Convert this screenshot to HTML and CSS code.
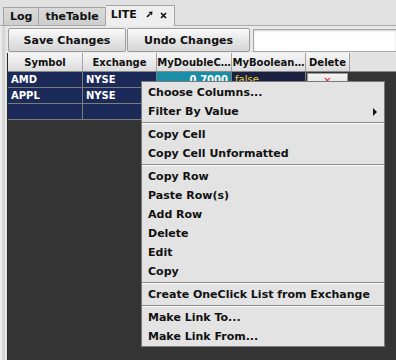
FILE: index.html
```html
<!DOCTYPE html>
<html>
<head>
    <title>LITE</title>
    <link rel="stylesheet" href="styles.css">
</head>
<body>
    <div class="tabs">
        <div class="tab">Log</div>
        <div class="tab">theTable</div>
        <div class="tab active">
            <span>LITE</span>
            <svg class="undock" width="7" height="7" viewBox="0 0 7 7">
                <path d="M1 6 L4 3" stroke="#111" stroke-width="1.6"/>
                <path d="M2.5 1 L6.5 0.5 L6 4.5 Z" fill="#111"/>
            </svg>
            <svg class="close" width="7" height="7" viewBox="0 0 7 7">
                <path d="M1 1 L6 6 M6 1 L1 6" stroke="#111" stroke-width="1.7"/>
            </svg>
        </div>
    </div>

    <div class="content">
        <div class="toolbar">
            <button class="btn save">Save Changes</button>
            <button class="btn undo">Undo Changes</button>
            <input class="field" type="text">
        </div>

        <div class="table">
            <div class="row head">
                <div class="hcell">Symbol</div>
                <div class="hcell">Exchange</div>
                <div class="hcell">MyDoubleC…</div>
                <div class="hcell">MyBoolean…</div>
                <div class="hcell">Delete</div>
            </div>
            <div class="row data">
                <div class="cell">AMD</div>
                <div class="cell">NYSE</div>
                <div class="cell num">0.7000</div>
                <div class="cell bool">false</div>
                <div class="cell del"><span class="x">&#x2715;</span></div>
            </div>
            <div class="row data">
                <div class="cell">APPL</div>
                <div class="cell">NYSE</div>
                <div class="cell"></div>
                <div class="cell"></div>
                <div class="cell"></div>
            </div>
            <div class="row data">
                <div class="cell"></div>
                <div class="cell"></div>
                <div class="cell"></div>
                <div class="cell"></div>
                <div class="cell"></div>
            </div>
        </div>

        <!-- right-click menu over the table -->
        <div class="menu">
            <div class="item">Choose Columns...</div>
            <div class="item sub">Filter By Value <span class="arrow"></span></div>
            <div class="sep"></div>
            <div class="item">Copy Cell</div>
            <div class="item">Copy Cell Unformatted</div>
            <div class="sep"></div>
            <div class="item">Copy Row</div>
            <div class="item">Paste Row(s)</div>
            <div class="item">Add Row</div>
            <div class="item">Delete</div>
            <div class="item">Edit</div>
            <div class="item">Copy</div>
            <div class="sep"></div>
            <div class="item">Create OneClick List from Exchange</div>
            <div class="sep"></div>
            <div class="item">Make Link To...</div>
            <div class="item">Make Link From...</div>
        </div>
    </div>
</body>
</html>
```

FILE: styles.css
```css
html, body {
    margin: 0;
    height: 100%;
    overflow: hidden;
}

body {
    display: flex;
    flex-direction: column;
    background: #e1e1e1;
    font-family: 'DejaVu Sans', sans-serif;
    font-weight: bold;
    font-size: 11px;
    color: #111;
}

.tabs {
    height: 25px;
    display: flex;
    align-items: flex-end;
    padding-left: 3px;
    border-bottom: 1px solid #a9a9a9;
    box-sizing: content-box;
}

.tab {
    height: 17px;
    padding: 0 6px;
    display: flex;
    align-items: center;
    border: 1px solid #a4a4a4;
    border-bottom: none;
    border-left: none;
    background: linear-gradient(#dadada, #cdcdcd);
    font-size: 11px;
}

.tab:first-child {
    border-left: 1px solid #a4a4a4;
}

.tab.active {
    height: 21px;
    margin-bottom: -1px;
    padding: 2px 7px 1px 5px;
    background: #eeeeee;
    align-items: flex-start;
    box-sizing: border-box;
}

.tab.active span {
    margin-right: 9px;
}

.undock {
    margin-top: 3px;
    margin-right: 7px;
}

.close {
    margin-top: 4px;
}

.content {
    flex: 1;
    display: flex;
    flex-direction: column;
    position: relative;
    padding-left: 7px;
    background: linear-gradient(90deg, #ececec 0, #ececec 2px, #d6d6d6 2px, #d6d6d6 5px, #e4e4e4 5px);
}

.toolbar {
    height: 27px;
    display: flex;
    align-items: flex-start;
    padding: 2px 0 0 1px;
    box-sizing: border-box;
    background: #e8e8e8;
}

.btn {
    flex-shrink: 0;
    height: 24px;
    margin: 0 1px 0 0;
    padding: 0;
    font-family: 'DejaVu Sans', sans-serif;
    font-weight: bold;
    font-size: 11px;
    color: #111;
    border: 1px solid #9c9c9c;
    border-radius: 2px;
    background: linear-gradient(#fbfbfb, #e6e6e6 50%, #d6d6d6);
}

.save {
    width: 118px;
}

.undo {
    width: 123px;
}

.field {
    flex: 1;
    min-width: 0;
    height: 23px;
    margin: 1px 0 0 2px;
    padding: 0;
    border: 1px solid #a8a8a8;
    border-right: none;
    background: #fff;
    box-shadow: inset 0 1px 2px rgba(0, 0, 0, 0.2);
    box-sizing: border-box;
}

.table {
    flex: 1;
    background: #343434;
    border-left: 1px solid #2a2a2a;
}

.row {
    display: grid;
    grid-template-columns: 75px 74px 75px 74px 44px;
}

.head {
    height: 19px;
    grid-template-columns: 75px 74px 75px 74px 44px 1fr;
    background: #e2e2e2;
    border-bottom: 1px solid #888;
    box-sizing: border-box;
    font-size: 10px;
}

.hcell {
    display: flex;
    align-items: center;
    justify-content: center;
    background: linear-gradient(#f6f6f6, #dcdcdc);
    border-right: 1px solid #a2a2a2;
    white-space: nowrap;
    overflow: hidden;
}

.data {
    height: 16px;
    width: 342px;
    font-size: 10px;
}

.cell {
    height: 15px;
    line-height: 15px;
    padding-left: 3px;
    background: #1b2a58;
    color: #fff;
    border-right: 1px solid #7c7c7c;
    border-bottom: 1px solid #7c7c7c;
    white-space: nowrap;
    overflow: hidden;
}

.cell.num {
    background: #1a8ea6;
    text-align: right;
    padding: 0 3px 0 0;
}

.cell.bool {
    background: #1b2040;
    color: #e6d43c;
    font-weight: normal;
}

.cell.del {
    padding: 0;
    margin: 1px 2px 0 1px;
    height: 14px;
    background: linear-gradient(#f4f4f4, #dedede);
    border: 1px solid #9a9a9a;
    text-align: center;
    line-height: 13px;
}

.x {
    color: #e8242a;
    font-size: 10px;
}

.menu {
    position: absolute;
    left: 141px;
    top: 55px;
    width: 244px;
    padding-top: 1px;
    background: #e3e3e3;
    border: 1px solid #7a7a7a;
    box-sizing: border-box;
}

.item {
    height: 19px;
    line-height: 19px;
    padding-left: 6px;
    position: relative;
    white-space: nowrap;
}

.arrow {
    position: absolute;
    right: 7px;
    top: 6px;
    width: 0;
    height: 0;
    border-top: 4px solid transparent;
    border-bottom: 4px solid transparent;
    border-left: 4px solid #111;
}

.sep {
    margin: 1px 0;
    border-top: 1px solid #8c8c8c;
    border-bottom: 1px solid #fafafa;
}
```
